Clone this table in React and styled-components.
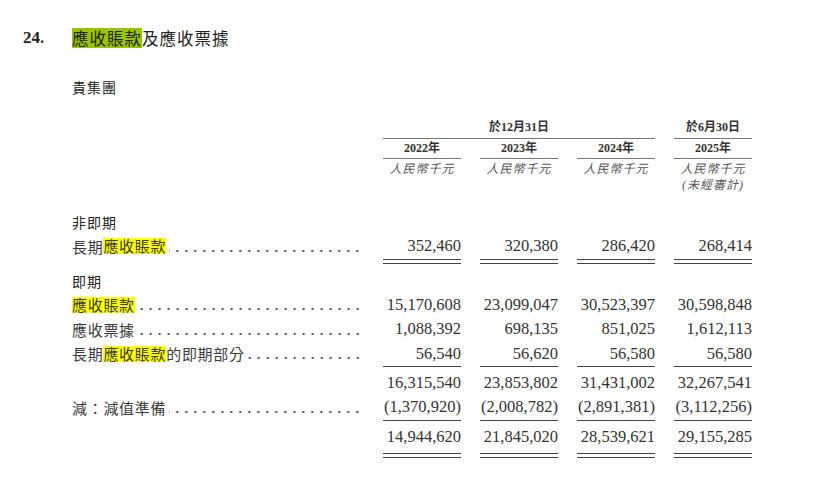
import React from "react";
import styled, { createGlobalStyle } from "styled-components";

const GlobalStyle = createGlobalStyle`
  body {
    margin: 0;
    background: #ffffff;
    font-family: "Noto Sans CJK TC", "Noto Sans CJK SC", sans-serif;
    color: #333;
  }
`;

const CJK = `"Noto Sans CJK TC", "Noto Sans CJK SC", sans-serif`;
const SERIF = `"Liberation Serif", "Noto Sans CJK TC", serif`;

const Page = styled.div`
  padding: 26px 0 0 23px;
`;

const Title = styled.h1`
  display: flex;
  align-items: center;
  margin: 0;
  height: 24px;
  font-weight: normal;
  font-size: 16.5px;
  letter-spacing: 1px;
  color: #222;
  font-family: ${CJK};
`;

const Number = styled.span`
  width: 49px;
  font-family: "Liberation Serif", serif;
  font-weight: bold;
  font-size: 17px;
  letter-spacing: 0;
`;

const Mark = styled.span`
  display: inline-block;
  background: ${(p) => p.$color};
  height: ${(p) => p.$h}px;
  line-height: ${(p) => p.$h}px;
`;

const Subtitle = styled.div`
  margin: 27px 0 0 49px;
  line-height: 20px;
  font-size: 14px;
  letter-spacing: 1px;
  color: #222;
`;

const Table = styled.div`
  margin: 21px 0 0 49px;
`;

const Row = styled.div`
  display: grid;
  grid-template-columns: 292px repeat(4, 78px);
  column-gap: 19px;
  height: ${(p) => p.$h || 24.5}px;
  margin-top: ${(p) => p.$mt || 0}px;
`;

const HeadCell = styled.div`
  grid-column: ${(p) => p.$col};
  text-align: center;
  font-family: ${SERIF};
  font-weight: ${(p) => (p.$bold ? "bold" : "normal")};
  font-style: ${(p) => (p.$italic ? "italic" : "normal")};
  font-size: 12px;
  letter-spacing: ${(p) => (p.$italic ? "1px" : "0")};
  line-height: ${(p) => p.$lh || 18}px;
  color: ${(p) => (p.$italic ? "#555" : "#333")};
  padding-top: ${(p) => p.$pt || 0}px;
  padding-bottom: ${(p) => p.$pb || 0}px;
  border-bottom: ${(p) => (p.$line ? "1px solid #777" : "none")};
  align-self: start;
`;

const Section = styled.div`
  grid-column: 1;
  display: flex;
  align-items: center;
  font-size: 14px;
  letter-spacing: 1px;
  color: #222;
`;

const Label = styled.div`
  grid-column: 1;
  display: flex;
  align-items: center;
  font-size: 15px;
  letter-spacing: 0.7px;
  color: #3a3a3a;
  white-space: nowrap;
`;

const Leader = styled.span`
  flex: 1;
  align-self: stretch;
  margin: 0 2px 0 3px;
  background-image: radial-gradient(circle, #444 0.9px, transparent 1.3px);
  background-size: 9px 4px;
  background-repeat: repeat-x;
  background-position: right bottom 6px;
`;

const Value = styled.div`
  display: flex;
  align-items: center;
  justify-content: flex-end;
  font-family: "Liberation Serif", serif;
  font-size: 16.5px;
  color: #333;
`;

const Rule = styled.div`
  grid-column: ${(p) => p.$col};
  height: ${(p) => (p.$double ? 3 : 0)}px;
  border-top: 1px solid #444;
  border-bottom: ${(p) => (p.$double ? "1px solid #444" : "none")};
`;

const Hl = ({ children }) => (
  <Mark $color="#ffff00" $h={16}>
    {children}
  </Mark>
);

const RuleRow = ({ double, mt }) => (
  <Row $h={double ? 5 : 1} $mt={mt}>
    {[2, 3, 4, 5].map((c) => (
      <Rule key={c} $col={c} $double={double} />
    ))}
  </Row>
);

const DataRow = ({ label, values, dots = true }) => (
  <Row>
    <Label>
      {label}
      {dots && <Leader />}
    </Label>
    {values.map((v, i) => (
      <Value key={i}>{v}</Value>
    ))}
  </Row>
);

export default function App() {
  return (
    <>
      <GlobalStyle />
      <Page>
        <Title>
          <Number>24.</Number>
          <Mark $color="#99c400" $h={20}>應收賬款</Mark>及應收票據
        </Title>
        <Subtitle>貴集團</Subtitle>

        <Table>
          <Row $h={21}>
            <HeadCell $col="2 / span 3" $bold $pb={2} $line>
              於12月31日
            </HeadCell>
            <HeadCell $col="5" $bold $pb={2} $line>
              於6月30日
            </HeadCell>
          </Row>
          <Row $h={20}>
            {["2022", "2023", "2024", "2025"].map((y, i) => (
              <HeadCell key={y} $col={i + 2} $bold $pb={1} $line>
                {y}年
              </HeadCell>
            ))}
          </Row>
          <Row $h={34}>
            {[2, 3, 4].map((c) => (
              <HeadCell key={c} $col={c} $italic $pt={2} $lh={16}>
                人民幣千元
              </HeadCell>
            ))}
            <HeadCell $col={5} $italic $pt={2} $lh={16}>
              人民幣千元
              <br />
              (未經審計)
            </HeadCell>
          </Row>

          <Row $h={24} $mt={17}>
            <Section>非即期</Section>
          </Row>
          <DataRow
            label={<>長期<Hl>應收賬款</Hl></>}
            values={["352,460", "320,380", "286,420", "268,414"]}
          />
          <RuleRow double />

          <Row $h={24} $mt={5}>
            <Section>即期</Section>
          </Row>
          <DataRow
            label={<Hl>應收賬款</Hl>}
            values={["15,170,608", "23,099,047", "30,523,397", "30,598,848"]}
          />
          <DataRow
            label="應收票據"
            values={["1,088,392", "698,135", "851,025", "1,612,113"]}
          />
          <DataRow
            label={<>長期<Hl>應收賬款</Hl>的即期部分</>}
            values={["56,540", "56,620", "56,580", "56,580"]}
          />
          <RuleRow />
          <Row $h={24} $mt={4}>
            <Label />
            {["16,315,540", "23,853,802", "31,431,002", "32,267,541"].map((v) => (
              <Value key={v}>{v}</Value>
            ))}
          </Row>
          <DataRow
            label="減：減值準備"
            values={["(1,370,920)", "(2,008,782)", "(2,891,381)", "(3,112,256)"]}
          />
          <RuleRow />
          <Row $h={24} $mt={4}>
            <Label />
            {["14,944,620", "21,845,020", "28,539,621", "29,155,285"].map((v) => (
              <Value key={v}>{v}</Value>
            ))}
          </Row>
          <RuleRow double mt={4} />
        </Table>
      </Page>
    </>
  );
}
